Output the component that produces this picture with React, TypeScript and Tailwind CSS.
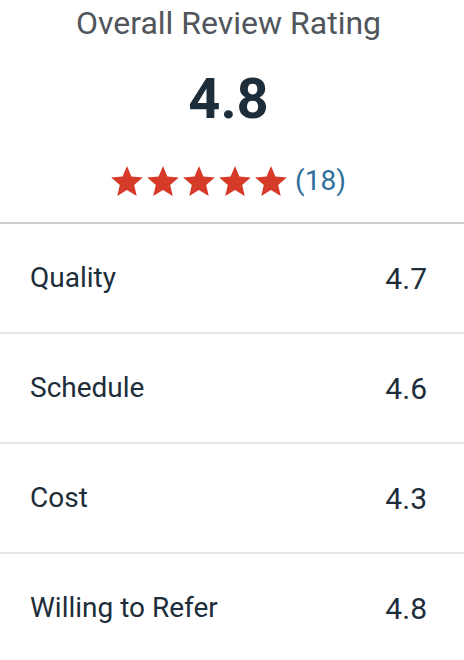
const rows = [
  { label: "Quality", value: "4.7" },
  { label: "Schedule", value: "4.6" },
  { label: "Cost", value: "4.3" },
  { label: "Willing to Refer", value: "4.8" },
];

const Star = () => (
  <svg viewBox="2 2 20 19" className="w-[32px] h-[30px] mr-[4px]" fill="#d63a29">
    <polygon points="12 17.27 18.18 21 16.54 13.97 22 9.24 14.81 8.63 12 2 9.19 8.63 2 9.24 7.46 13.97 5.82 21" />
  </svg>
);

export default function App() {
  return (
    <div className="w-[464px] h-[660px] bg-white font-['Roboto',sans-serif] overflow-hidden">
      <div className="flex flex-col items-center pt-[3px] pr-[7px]">
        <h2 className="text-[32px] leading-[40px] text-[#50565b]">Overall Review Rating</h2>
        <div className="mt-[23px] text-[56px] leading-[66px] font-bold text-[#1d2d3a]">4.8</div>
        <div className="mt-[33px] h-[32px] flex items-center">
          {[0, 1, 2, 3, 4].map((i) => (
            <Star key={i} />
          ))}
          <span className="ml-[4px] text-[28px] leading-[32px] text-[#2f6f9c]">(18)</span>
        </div>
      </div>
      <div className="mt-[25px] border-t-2 border-[#cccccc]">
        {rows.map((r) => (
          <div
            key={r.label}
            className="h-[110px] flex items-center justify-between pl-[30px] pr-[37px] border-b-2 border-[#e6e6e6]"
          >
            <span className="text-[28px] text-[#1d2d3a]">{r.label}</span>
            <span className="text-[30px] text-[#1d2d3a]">{r.value}</span>
          </div>
        ))}
      </div>
    </div>
  );
}
